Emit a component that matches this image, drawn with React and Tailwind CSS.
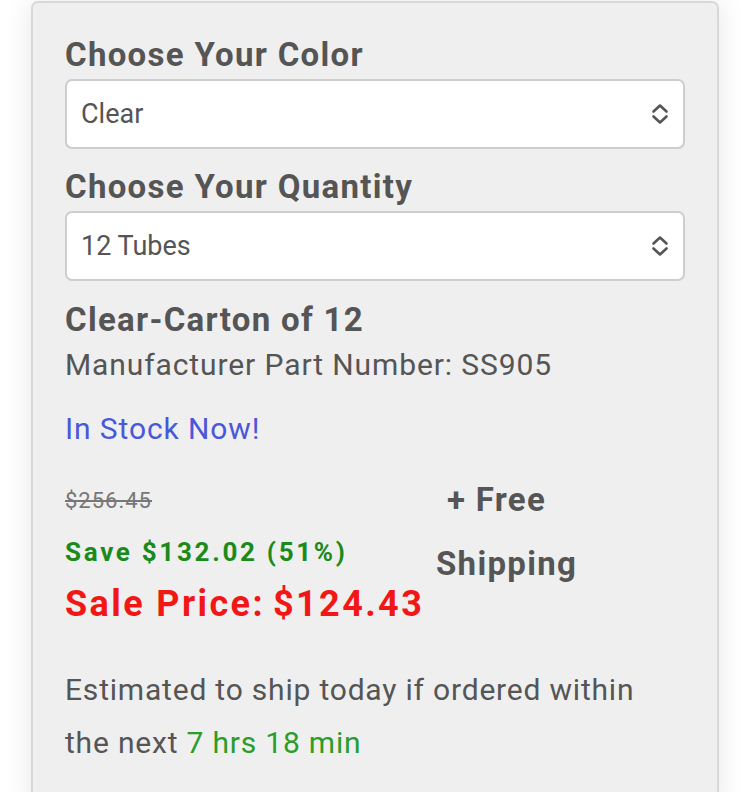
import React from "react";

const Chevrons = () => (
  <svg width="20" height="24" viewBox="0 0 20 24" fill="none" stroke="#555" strokeWidth="2.6" strokeLinecap="round" strokeLinejoin="round">
    <path d="M3.5 9.5 L10 3.5 L16.5 9.5" />
    <path d="M3.5 14.5 L10 20.5 L16.5 14.5" />
  </svg>
);

const Select = ({ value }) => (
  <div className="flex h-[70px] items-center justify-between rounded-[7px] border-2 border-[#cdcdcd] bg-white pl-[14px] pr-[13px]">
    <span className="text-[27px] text-[#555]">{value}</span>
    <Chevrons />
  </div>
);

const heading = "text-[33px] font-bold leading-[40px] tracking-[1.3px] text-[#555]";

export default function App() {
  return (
    <div className="min-h-screen bg-white px-[31px] pt-px" style={{ fontFamily: "Roboto, 'Liberation Sans', sans-serif" }}>
      <div className="rounded-t-[7px] border-2 border-b-0 border-[#d8d8d8] bg-[#efefef] px-[32px] pt-[32px] pb-10 shadow-[0_0_28px_rgba(0,0,0,0.10)]">
        <h2 className={heading}>Choose Your Color</h2>
        <div className="mt-[4px]">
          <Select value="Clear" />
        </div>
        <h2 className={`mt-[18px] ${heading}`}>Choose Your Quantity</h2>
        <div className="mt-[4px]">
          <Select value="12 Tubes" />
        </div>
        <h3 className={`mt-[19px] ${heading}`}>Clear-Carton of 12</h3>
        <p className="mt-[3px] text-[30px] leading-[44px] tracking-[0.9px] text-[#555]">Manufacturer Part Number: SS905</p>
        <p className="mt-[20px] text-[30px] leading-[44px] tracking-[0.9px] text-[#4b57d9]">In Stock Now!</p>
        <div className="mt-[36px] flex">
          <div className="w-[371px] shrink-0">
            <div className="text-[22px] leading-[28px] tracking-[1px] text-[#777] line-through">$256.45</div>
            <div className="mt-[21px] text-[26px] font-bold leading-[32px] tracking-[2.7px] text-[#1a8a1a]">Save $132.02 (51%)</div>
            <div className="mt-[14px] text-[36px] font-bold leading-[44px] tracking-[2.4px] text-[#f21717]">
              Sale Price:<span className="ml-[8px]">$124.43</span>
            </div>
          </div>
          <div className={`-mt-[19px] flex flex-col items-start ${heading} leading-[64px]`}>
            <span className="ml-[11px]">+ Free</span>
            <span>Shipping</span>
          </div>
        </div>
        <p className="mt-[37px] max-w-[610px] text-[30px] leading-[53px] tracking-[0.8px] text-[#555]">
          Estimated to ship today if ordered within
          <br />
          the next <span className="text-[#2a9d2a]">7 hrs 18 min</span>
        </p>
      </div>
    </div>
  );
}
